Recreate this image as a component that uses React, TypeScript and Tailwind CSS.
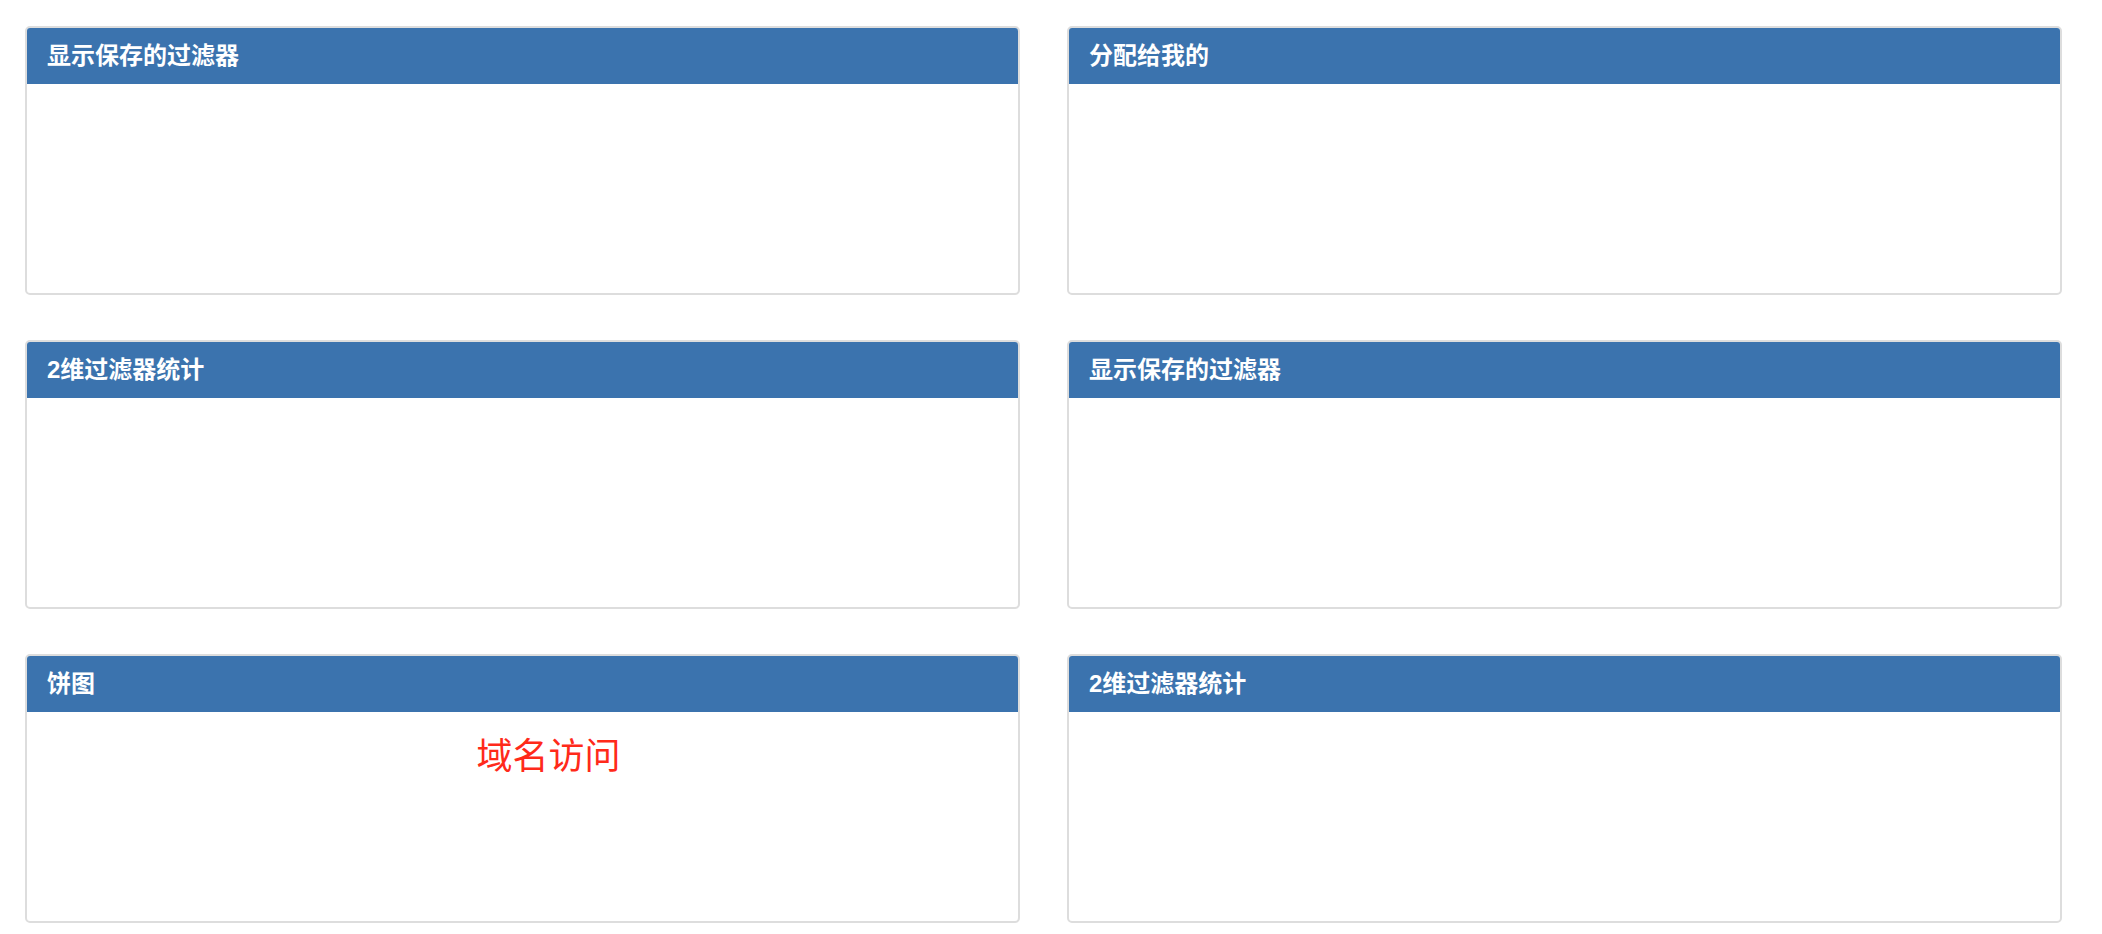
import React from 'react';

interface PanelProps {
    title: string;
    children?: React.ReactNode;
}

const panels: { title: string; body?: string }[] = [
    { title: '显示保存的过滤器' },
    { title: '分配给我的' },
    { title: '2维过滤器统计' },
    { title: '显示保存的过滤器' },
    { title: '饼图', body: '域名访问' },
    { title: '2维过滤器统计' },
];

const Panel: React.FC<PanelProps> = ({ title, children }) => {
    return (
        <div className="h-[269px] border-2 border-[#dddddd] rounded-[5px] overflow-hidden bg-white flex flex-col">
            <div className="h-[56px] shrink-0 bg-[#3b73ae] flex items-center px-[20px]">
                <h3 className="text-white font-bold text-[24px] leading-none">{title}</h3>
            </div>
            <div className="flex-1">{children}</div>
        </div>
    );
};

export default function App() {
    return (
        <div
            className="min-h-screen bg-white pl-[25px] pt-[26px]"
            style={{ fontFamily: '"Liberation Sans", "Noto Sans CJK SC", sans-serif' }}
        >
            <div className="grid grid-cols-[995px_995px] gap-x-[47px] gap-y-[45px]">
                {panels.map((p, i) => (
                    <Panel key={i} title={p.title}>
                        {p.body && (
                            <div className="pt-[21px] pl-[52px] text-center text-[36px] leading-[48px] text-[#ff2a1a]">
                                {p.body}
                            </div>
                        )}
                    </Panel>
                ))}
            </div>
        </div>
    );
}
